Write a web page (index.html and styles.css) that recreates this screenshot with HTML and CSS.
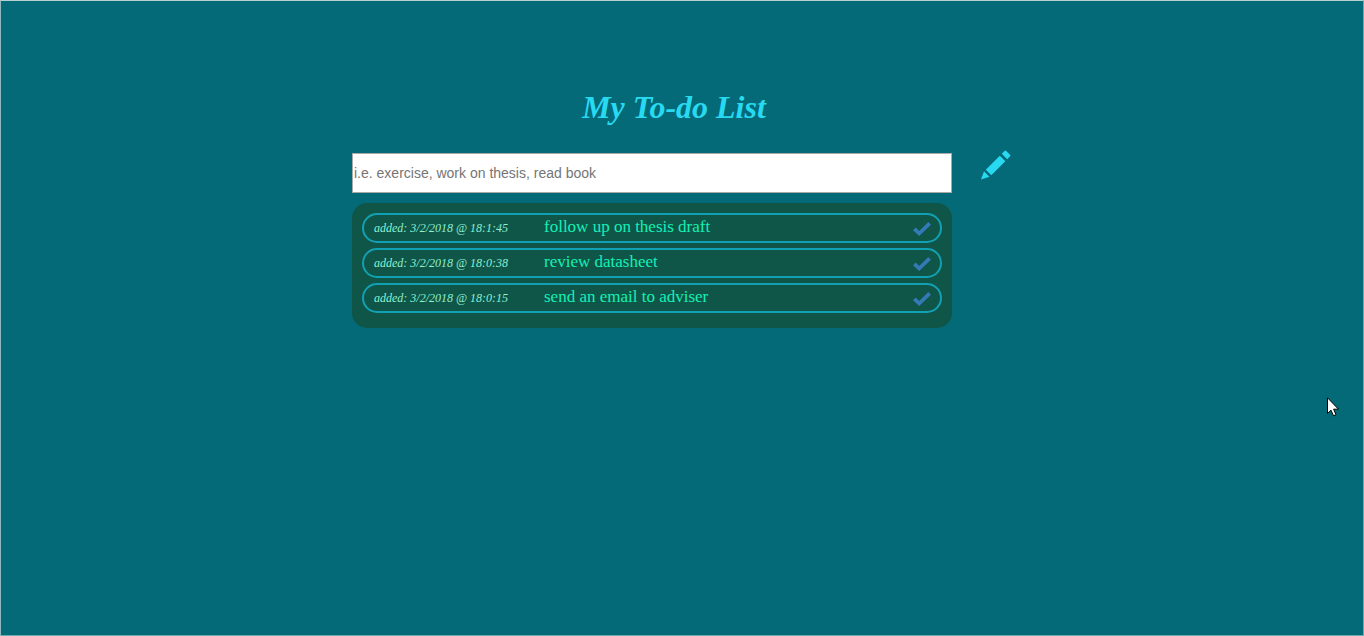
FILE: index.html
```html
<!DOCTYPE html>
<html lang="en">
<head>
<meta charset="utf-8">
<title>My To-do List</title>
<link rel="stylesheet" href="styles.css">
</head>
<body>
<main class="app">
  <h1 class="title">My To-do List</h1>
  <form class="entry">
    <input class="entry-input" type="text" aria-label="New task" placeholder="i.e. exercise, work on thesis, read book">
    <button class="entry-add" type="button" aria-label="Add task">
      <svg class="pencil" viewBox="0 0 30 30" aria-hidden="true"><path d="M0 29.500 3 21.300 8.500 26.800ZM4.800 19.700 18.800 5.700 24.300 11.200 10.300 25.200ZM20.800 3.800 23.800 .8Q24.500 .2 25.200 .9L29 4.700Q29.700 5.500 29 6.200L26.200 9.200Z"/></svg>
    </button>
  </form>
  <ul class="tasks">
    <li class="task">
      <span class="task-date">added: 3/2/2018 @ 18:1:45</span>
      <span class="task-text">follow up on thesis draft</span>
      <button class="task-done" type="button" aria-label="Mark done"><svg class="check" viewBox="0 0 18 14" aria-hidden="true"><path d="M0 8.300 2.700 5.600 6.200 9 15.300 0 18 2.700 6.200 14Z"/></svg></button>
    </li>
    <li class="task">
      <span class="task-date">added: 3/2/2018 @ 18:0:38</span>
      <span class="task-text">review datasheet</span>
      <button class="task-done" type="button" aria-label="Mark done"><svg class="check" viewBox="0 0 18 14" aria-hidden="true"><path d="M0 8.300 2.700 5.600 6.200 9 15.300 0 18 2.700 6.200 14Z"/></svg></button>
    </li>
    <li class="task">
      <span class="task-date">added: 3/2/2018 @ 18:0:15</span>
      <span class="task-text">send an email to adviser</span>
      <button class="task-done" type="button" aria-label="Mark done"><svg class="check" viewBox="0 0 18 14" aria-hidden="true"><path d="M0 8.300 2.700 5.600 6.200 9 15.300 0 18 2.700 6.200 14Z"/></svg></button>
    </li>
  </ul>
</main>
<svg class="cursor" viewBox="0 0 12 20" aria-hidden="true"><path d="M.5.8V16.500L4 13.200 6.500 18.800 9 17.700 6.600 12.200H11.500Z"/></svg>
</body>
</html>
```
FILE: styles.css
```css
* {
  box-sizing: border-box;
}

body {
  margin: 0;
  min-height: 100vh;
  padding: 80px 16px 16px;
  background: #046a78;
  border: 1px solid #6fa9b0;
  border-top-color: #b9cfd0;
  border-left-color: #8fb9be;
  font-family: "Liberation Serif", serif;
}

.app {
  max-width: 660px;
  margin: 0 auto;
}

.title {
  margin: 0;
  padding-right: 16px;
  font-size: 32px;
  line-height: 52px;
  font-style: italic;
  font-weight: bold;
  text-align: center;
  color: #28d9f2;
}

.entry {
  display: flex;
  align-items: flex-start;
  margin-top: 17px;
}

.entry-input {
  flex: 1;
  min-width: 0;
  height: 40px;
  margin-top: 3px;
  padding: 1px;
  border: 1px solid #a9a9a9;
  border-radius: 0;
  background: #fff;
  font: 14px "Liberation Sans", sans-serif;
}

.entry-input::placeholder {
  color: #757575;
}

.entry-add,
.task-done {
  flex: none;
  padding: 0;
  border: 0;
  background: none;
  cursor: pointer;
}

.entry-add {
  width: 60px;
  padding-left: 29px;
}

.pencil {
  display: block;
  width: 30px;
  height: 30px;
  fill: #28d9f2;
}

.tasks {
  display: flex;
  flex-direction: column;
  gap: 5px;
  margin: 10px 60px 0 0;
  padding: 10px 10px 15px;
  list-style: none;
  border-radius: 15px;
  background: #0f5648;
}

.task {
  display: flex;
  align-items: flex-start;
  min-height: 30px;
  padding: 0 9px 0 10px;
  border: 2px solid #12a0b4;
  border-radius: 15px;
}

.task-date {
  flex: 0 0 170px;
  font-size: 12px;
  line-height: 26px;
  font-style: italic;
  color: #8df0d4;
}

.task-text {
  flex: 1;
  font-size: 17px;
  line-height: 24px;
  color: #14f0b6;
}

.check {
  display: block;
  width: 18px;
  height: 14px;
  margin-top: 7px;
  fill: #337ab7;
}

.cursor {
  position: absolute;
  top: 397px;
  right: 25px;
  width: 12px;
  height: 20px;
  fill: #fff;
  stroke: #000;
}
```
